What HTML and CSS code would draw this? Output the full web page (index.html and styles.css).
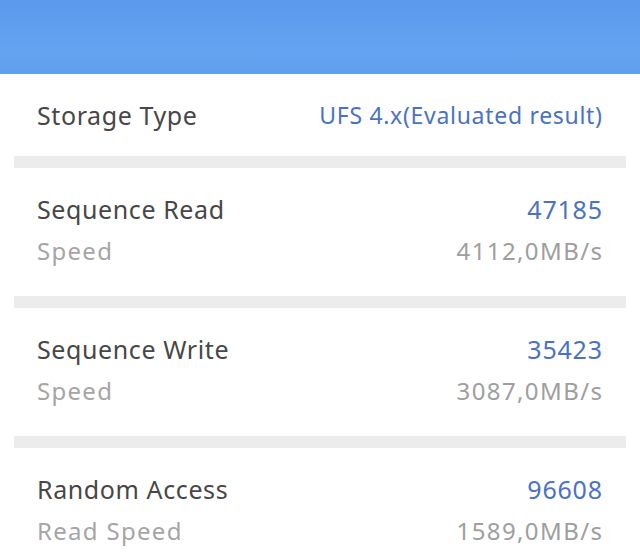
FILE: index.html
```html
<!DOCTYPE html>
<html>
<head>
<meta charset="utf-8">
<link rel="stylesheet" href="styles.css">
</head>
<body>
<div class="header"></div>
<div class="section storage">
  <div class="row">
    <span class="label">Storage Type</span>
    <span class="value type">UFS 4.x(Evaluated result)</span>
  </div>
</div>
<div class="sep"></div>
<div class="section">
  <div class="row">
    <span class="label">Sequence Read</span>
    <span class="value score">47185</span>
  </div>
  <div class="row sub">
    <span class="sublabel">Speed</span>
    <span class="subvalue">4112,0MB/s</span>
  </div>
</div>
<div class="sep"></div>
<div class="section">
  <div class="row">
    <span class="label">Sequence Write</span>
    <span class="value score">35423</span>
  </div>
  <div class="row sub">
    <span class="sublabel">Speed</span>
    <span class="subvalue">3087,0MB/s</span>
  </div>
</div>
<div class="sep"></div>
<div class="section">
  <div class="row">
    <span class="label">Random Access</span>
    <span class="value score">96608</span>
  </div>
  <div class="row sub">
    <span class="sublabel">Read Speed</span>
    <span class="subvalue">1589,0MB/s</span>
  </div>
</div>
</body>
</html>
```
FILE: styles.css
```css
html, body {
  margin: 0;
  padding: 0;
  background: #ffffff;
  font-family: "Noto Sans", Roboto, sans-serif;
}
body {
  width: 640px;
  height: 560px;
  overflow: hidden;
}
.header {
  height: 74px;
  background: linear-gradient(180deg, #5b9aec 0%, #63a3f0 70%, #5f9fee 100%);
}
.section {
  padding: 25px 38px 29px 37px;
  display: flex;
  flex-direction: column;
  gap: 10px;
}
.section.storage {
  padding: 25px 38px 25px 37px;
}
.row {
  display: flex;
  justify-content: space-between;
  align-items: center;
  height: 32px;
  line-height: 32px;
}
.label {
  font-size: 25px;
  letter-spacing: 0.6px;
  color: #474747;
}
.value {
  color: #4a72c4;
}
.type {
  font-size: 23px;
  letter-spacing: 0.7px;
  margin-right: -0.7px;
}
.score {
  font-size: 25px;
  letter-spacing: 0.8px;
  margin-right: -0.8px;
}
.sublabel {
  font-size: 24px;
  letter-spacing: 1.3px;
  color: #a5a5a5;
}
.subvalue {
  font-size: 24px;
  letter-spacing: 1.4px;
  margin-right: -1.4px;
  color: #9e9e9e;
}
.sep {
  height: 12px;
  margin: 0 14px;
  background: #ececec;
}
```
